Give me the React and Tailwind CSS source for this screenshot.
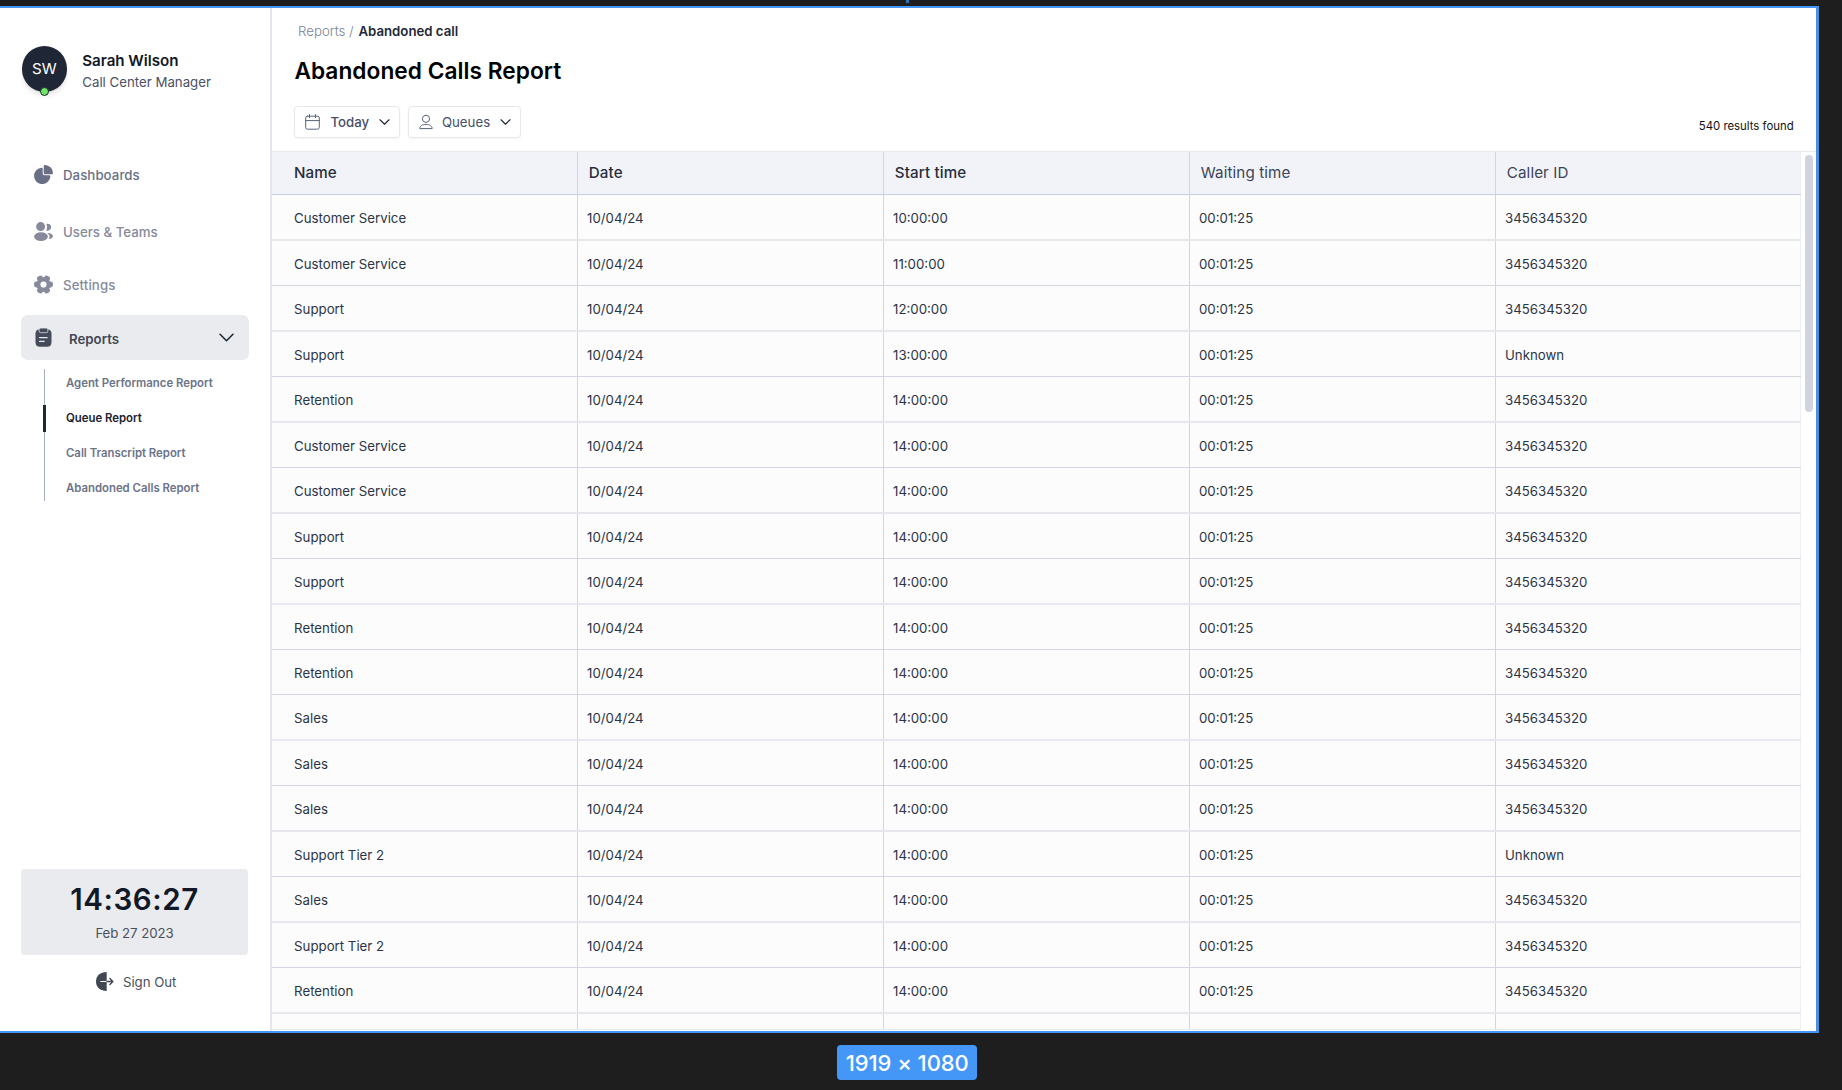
const columns = ["Name", "Date", "Start time", "Waiting time", "Caller ID"];

const UNKNOWN = "Unknown";
const PHONE = "3456345320";

const calls = [
  ["Customer Service", "10:00:00", PHONE, "tall"],
  ["Customer Service", "11:00:00", PHONE, "short"],
  ["Support", "12:00:00", PHONE, "tall"],
  ["Support", "13:00:00", UNKNOWN, "short"],
  ["Retention", "14:00:00", PHONE, "tall"],
  ["Customer Service", "14:00:00", PHONE, "short"],
  ["Customer Service", "14:00:00", PHONE, "tall"],
  ["Support", "14:00:00", PHONE, "short"],
  ["Support", "14:00:00", PHONE, "tall"],
  ["Retention", "14:00:00", PHONE, "short"],
  ["Retention", "14:00:00", PHONE, "short"],
  ["Sales", "14:00:00", PHONE, "tall"],
  ["Sales", "14:00:00", PHONE, "short"],
  ["Sales", "14:00:00", PHONE, "tall"],
  ["Support Tier 2", "14:00:00", UNKNOWN, "short"],
  ["Sales", "14:00:00", PHONE, "tall"],
  ["Support Tier 2", "14:00:00", PHONE, "short"],
  ["Retention", "14:00:00", PHONE, "tall"],
];

const rowStyles = {
  tall: "h-[46px] border-b-2 border-[#e6e8ed]",
  short: "h-[45px] border-b border-[#d3d7df]",
};

const gridCols = "grid grid-cols-[306px_306px_306px_306px_305px]";

function PieIcon() {
  return (
    <svg className="size-[19px]" viewBox="0 0 19 19" fill="currentColor">
      <path d="M7.8 2.700c.5 0 .9.300.9.900v4.700c0 1.200.8 2 2 2h4.800c.6 0 .9.400.9.900a8.200 8.200 0 1 1-8.600-8.500z" />
      <path d="M9.700 1.200c0-.8.4-1.200 1.200-1.100 4.400.300 7.700 3.400 8 7.300.1 1.200-.3 1.900-1.200 1.900h-6.500c-1 0-1.500-.5-1.500-1.500z" />
    </svg>
  );
}

function UsersIcon() {
  return (
    <svg className="size-[19px]" viewBox="0 0 19 19" fill="currentColor">
      <circle cx="6.6" cy="4.6" r="4.5" />
      <ellipse cx="7" cy="14.6" rx="6.9" ry="4.3" />
      <path d="M12.4 1.9a3.5 3.5 0 1 1-.1 6.5 7 7 0 0 0 .1-6.5z" />
      <path d="M13.2 10.9c3.3.1 5.8 1.4 5.8 3.2 0 1.6-1.6 2.8-4.1 3.2 1.2-2.2.7-4.8-1.7-6.4z" />
    </svg>
  );
}

function GearIcon() {
  return (
    <svg className="size-[19px]" viewBox="0 0 19 19" fill="currentColor">
      <circle cx="9.5" cy="9.5" r="7.2" />
      <rect x="0" y="6.5" width="19" height="6" rx="2.4" />
      <rect x="0" y="6.5" width="19" height="6" rx="2.4" transform="rotate(60 9.5 9.5)" />
      <rect x="0" y="6.5" width="19" height="6" rx="2.4" transform="rotate(120 9.5 9.5)" />
      <circle cx="9.5" cy="9.5" r="3.1" fill="#fff" />
    </svg>
  );
}

function ClipboardIcon() {
  return (
    <svg className="size-[19px]" viewBox="0 0 19 19">
      <path
        d="M5 1.6h9c2.4.2 3.5 1.6 3.5 4v8.7c0 3-1.6 4.5-4.5 4.5H6c-2.9 0-4.5-1.5-4.5-4.5V5.6c0-2.4 1.1-3.8 3.5-4z"
        fill="#454c59"
      />
      <rect x="5.1" y="0.1" width="8.8" height="4.6" rx="1.7" fill="#454c59" stroke="#eaebef" strokeWidth="0.7" />
      <path d="M5.6 9.6h7.6M5.6 13.4h4.6" stroke="#eaebef" strokeWidth="1.2" strokeLinecap="round" />
    </svg>
  );
}

function SignOutIcon() {
  return (
    <svg className="h-[19px] w-[18px]" viewBox="0 0 18 19" fill="none">
      <path d="M10.7 0v19C4.3 19 0 15.3 0 9.5S4.3 0 10.7 0z" fill="#424754" />
      <path d="M4.8 9.5h6" stroke="#fff" strokeWidth="1.2" strokeLinecap="round" />
      <path d="M11 9.5h5.6M13.9 6.5l2.9 3-2.9 3" stroke="#424754" strokeWidth="1.4" strokeLinecap="round" strokeLinejoin="round" />
    </svg>
  );
}

function Chevron({ className }) {
  return (
    <svg className={className} viewBox="0 0 14 8" fill="none" stroke="#1f2937" strokeLinecap="round" strokeLinejoin="round">
      <path d="M1 1l6 6 6-6" strokeWidth="1.5" />
    </svg>
  );
}

function CalendarIcon() {
  return (
    <svg className="h-4 w-[15px]" viewBox="0 0 15 16" fill="none" stroke="#596378" strokeWidth="1" strokeLinecap="round">
      <rect x="0.7" y="2.2" width="13.6" height="13" rx="1.8" />
      <path d="M0.7 6.6h13.6M4.5.6v3M10.5.6v3" />
    </svg>
  );
}

function PersonIcon() {
  return (
    <svg className="h-4 w-[14px]" viewBox="0 0 14 16" fill="none" stroke="#596378" strokeWidth="1" strokeLinejoin="round">
      <circle cx="7" cy="4.8" r="3.6" />
      <path d="M.8 14.6c0-2.6 2.5-4.2 6.2-4.2s6.2 1.6 6.2 4.2z" />
    </svg>
  );
}

function NavItem({ icon, label, className }) {
  return (
    <div className={`flex items-center gap-[9.7px] pl-[34.3px] ${className}`}>
      {icon}
      <span className="text-[13.25px] leading-5">{label}</span>
    </div>
  );
}

function Sidebar() {
  return (
    <aside className="flex w-[272px] shrink-0 flex-col border-r-2 border-[#e4e6ed] bg-white">
      <div className="mt-[38px] flex h-[45.5px] items-center gap-[15.3px] pl-[21.5px]">
        <div className="relative flex size-[45.5px] items-center justify-center rounded-full bg-[#1f2636] pt-px text-[15.15px] text-white shadow-md">
          SW
          <span className="absolute -bottom-[4.5px] left-[18.5px] size-[9px] rounded-full border border-[#1f2636] bg-[#70e464]" />
        </div>
        <div className="pt-[5px]">
          <div className="text-[15.15px] leading-[21px] font-semibold tracking-[-0.02px] text-[#111827]">Sarah Wilson</div>
          <div className="text-[13.25px] leading-[22px] text-[#4b5162]">Call Center Manager</div>
        </div>
      </div>

      <nav className="mt-[59.5px] flex flex-col">
        <NavItem icon={<PieIcon />} label="Dashboards" className="h-[47px] font-medium tracking-[0.05px] text-[#697086]" />
        <NavItem icon={<UsersIcon />} label="Users & Teams" className="mt-2.5 h-[47px] font-medium text-[#868a9b]" />
        <NavItem icon={<GearIcon />} label="Settings" className="mt-1.5 h-[47px] font-medium tracking-[0.1px] text-[#868a9b]" />
        <div className="mt-[7px] ml-[21.3px] flex h-[45px] w-[227.5px] items-center rounded-[7px] bg-[#eaebef] pr-[14.5px] pl-[13px]">
          <ClipboardIcon />
          <span className="ml-[15.7px] flex-1 pt-[2px] text-[13.25px] leading-5 font-semibold text-[#414754]">Reports</span>
          <Chevron className="h-[9px] w-[15px]" />
        </div>
        <div className="mt-[9px] ml-11 flex h-[132px] border-l border-[#a9afbd]">
          <ul className="-mt-[4px] text-[11.36px] font-semibold text-[#6b7388]">
            <li className="flex h-[35px] items-center pt-[3px] pl-[21px]">Agent Performance Report</li>
            <li className="-ml-[2px] flex h-[35px] items-center text-[#1b2230]">
              <span className="mt-[2px] h-[27px] w-[2.5px] bg-[#1f2937]" />
              <span className="pt-[3px] pl-[20.5px]">Queue Report</span>
            </li>
            <li className="flex h-[35px] items-center pt-[3px] pl-[21px]">Call Transcript Report</li>
            <li className="flex h-[35px] items-center pt-[3px] pl-[21px]">Abandoned Calls Report</li>
          </ul>
        </div>
      </nav>

      <div className="mt-auto mb-[40px]">
        <div className="ml-[21.3px] flex h-[86px] w-[226.5px] flex-col items-center rounded bg-[#eaebef] pt-3">
          <div className="text-[29.5px] leading-9 font-semibold tracking-[0.6px] text-[#111827]">14:36:27</div>
          <div className="mt-[7px] text-[13.25px] leading-[18px] tracking-[-0.05px] text-[#4b4f5c]">Feb 27 2023</div>
        </div>
        <div className="mt-[17px] ml-24 flex h-[19px] items-center gap-[9px]">
          <SignOutIcon />
          <span className="pt-[2px] text-[13.25px] tracking-[-0.05px] text-[#4b4f5c]">Sign Out</span>
        </div>
      </div>
    </aside>
  );
}

function Filter({ icon, label, className }) {
  return (
    <button className={`flex h-8 items-center rounded-[4px] border border-[#e6e8ed] bg-white text-[13.25px] text-[#475067] shadow-xs ${className}`}>
      {icon}
      {label}
      <Chevron className="ml-auto h-[6px] w-[11px]" />
    </button>
  );
}

function Cell({ first, last, children }) {
  return (
    <div
      className={`flex items-center border-r pt-px leading-5 ${last ? "border-[#eeeff5]" : "border-[#d3d5df]"} ${first ? "pl-[22.1px]" : "pl-[9px]"}`}
    >
      {children}
    </div>
  );
}

function CallsTable() {
  return (
    <div className="flex h-[879px] border-t border-[#e8eaee]">
      <div className="w-[1529px]">
        <div className={`${gridCols} h-[43px] border-b border-[#cad1de] bg-[#f2f3f8] text-[15.15px]`}>
          {columns.map((title, i) => (
            <div
              key={title}
              className={`flex items-center border-r ${i === 4 ? "border-[#eeeff5]" : "border-[#d3d5df]"} ${i === 0 ? "pl-[22px]" : "pl-[10.8px]"} ${
                i < 3 ? "font-medium tracking-[0.12px] text-[#262d3d]" : "tracking-[0.12px] text-[#3c445a]"
              }`}
            >
              {title}
            </div>
          ))}
        </div>
        <div className="bg-[#fcfcfd] text-[13.25px] text-[#2b3445]">
          {calls.map(([name, start, caller, size], i) => (
            <div key={i} className={rowStyles[size]}>
              <div className={`${gridCols} h-full`}>
                <Cell first>{name}</Cell>
                <Cell>10/04/24</Cell>
                <Cell>{start}</Cell>
                <Cell>00:01:25</Cell>
                <Cell last>{caller}</Cell>
              </div>
            </div>
          ))}
          <div className={`${gridCols} h-4 border-b border-[#e8eaee]`}>
            {columns.map((title, i) => (
              <Cell key={title} last={i === 4} />
            ))}
          </div>
        </div>
      </div>
      <div className="mt-[3px] ml-1 h-[257px] w-2 rounded-full bg-[#cfd4de]" />
    </div>
  );
}

export default function App() {
  return (
    <div className="flex h-[1090px] w-[1842px] flex-col overflow-hidden bg-[#1e1e1e] font-['Inter',sans-serif]">
      <div className="flex h-1.5">
        <div className="ml-[906px] h-[3px] w-[3px] bg-[#2f6fb8]" />
      </div>
      <div className="flex h-[1027px] w-[1819px] border-y-2 border-r-[3px] border-[#4597f7] border-r-[#4a90dc] bg-white">
        <Sidebar />
        <main className="flex flex-1 flex-col">
          <header className="flex h-[143px] flex-col">
            <div className="mt-[13px] pl-[26px] text-[13.25px] leading-5">
              <span className="font-light text-[#7c8295]">Reports / </span>
              <span className="pl-px font-semibold tracking-[-0.02px] text-[#1f2937]">Abandoned call</span>
            </div>
            <h1 className="mt-[15px] pl-[22.4px] text-[22.7px] leading-[30px] font-semibold tracking-[0.04px] text-black">
              Abandoned Calls Report
            </h1>
            <div className="mt-5 flex items-center pl-[22.4px]">
              <Filter
                icon={<CalendarIcon />}
                label={<span className="ml-2.5 pt-[2px] font-medium">Today</span>}
                className="w-[105.5px] pr-[9px] pl-2.5"
              />
              <Filter
                icon={<PersonIcon />}
                label={<span className="ml-[9px] pt-[2px]">Queues</span>}
                className="ml-2 w-[113px] pr-[9px] pl-2.5"
              />
              <span className="mt-[9px] mr-[22.4px] ml-auto text-[11.36px] text-[#101010]">540 results found</span>
            </div>
          </header>
          <CallsTable />
        </main>
      </div>
      <div className="mt-3 ml-[837.2px] flex h-[34.5px] w-[140px] items-center justify-center rounded bg-[#4597f7] pt-[2px] text-[22px] font-medium tracking-[-0.06px] text-white">
        1919 × 1080
      </div>
    </div>
  );
}
